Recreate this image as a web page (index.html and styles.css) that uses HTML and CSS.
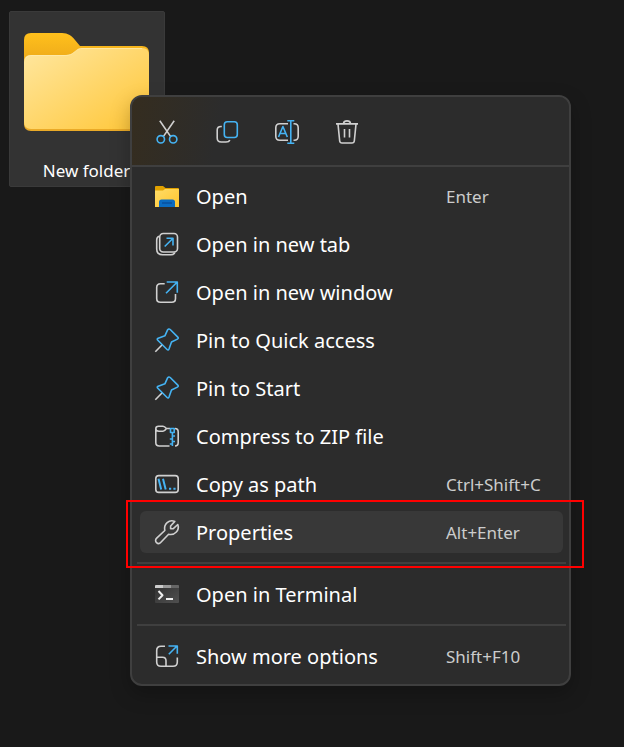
FILE: index.html
```html
<!DOCTYPE html>
<html lang="en">
<head>
<meta charset="utf-8">
<title>Desktop</title>
<link rel="stylesheet" href="styles.css">
</head>
<body>
<main class="desktop">
  <button class="file" type="button">
    <svg class="file-icon" viewBox="0 0 126 99" aria-hidden="true">
      <defs>
        <linearGradient id="front" x1="0" y1="0" x2="1" y2="1"><stop offset="0" stop-color="#ffe7a0"/><stop offset="1" stop-color="#ffc636"/></linearGradient>
        <linearGradient id="back" x1="0" y1="0" x2="0" y2="1"><stop offset="0" stop-color="#ffc01c"/><stop offset=".35" stop-color="#eaa51a"/><stop offset="1" stop-color="#eaaa28"/></linearGradient>
      </defs>
      <path fill="url(#back)" d="M0 7Q0 0 7 0H38C44 0 48 3 51 7L56 13H118Q125 13 125 20V91Q125 98 118 98H7Q0 98 0 91Z"/>
      <path fill="url(#front)" d="M0 29Q0 22 7 22H41C46 22 48 21 51 18.500C54 16 55 15 59 15H118Q125 15 125 22V89Q125 96 118 96H7Q0 96 0 89Z"/>
      <path fill="none" stroke="#ffefb8" stroke-opacity=".6" d="M2 25Q3 22.500 7 22.500H41C46 22.500 48 21 51 18.500C54 16 55 15.500 59 15.500H118"/>
    </svg>
    <span class="file-name">New folder</span>
  </button>

  <div class="menu">
    <div class="toolbar">
      <button class="tool" type="button" aria-label="Cut"><svg class="icon" viewBox="0 0 24 24"><path d="M4.800.8 15.700 16.600M19.200.8 8.300 16.600"/><g class="blue"><circle cx="5.800" cy="19.300" r="3.700"/><circle cx="18.200" cy="19.300" r="3.700"/></g></svg></button>
      <button class="tool" type="button" aria-label="Copy"><svg class="icon" viewBox="0 0 24 24"><path d="M6.800 6.500H6Q2.200 6.500 2.200 10V18Q2.200 22 6.200 22H11Q14 22 14.800 20"/><rect class="blue" x="9.300" y="1.700" width="13" height="15.800" rx="3"/></svg></button>
      <button class="tool" type="button" aria-label="Rename"><svg class="icon" viewBox="0 0 24 24"><path d="M13 3.700H4.800Q.8 3.700 .8 7.700V16.300Q.8 20.300 4.800 20.300H13M18.500 3.700H19.200Q23.200 3.700 23.200 7.700V16.300Q23.200 20.300 19.200 20.300H18.500"/><path class="blue" d="M12.300.7H19.300M12.300 23.300H19.300M15.800.7V23.300M3.500 17 7.900 6.500 12.300 17M5 13.500H10.800"/></svg></button>
      <button class="tool" type="button" aria-label="Delete"><svg class="icon" viewBox="0 0 24 24"><path d="M1 3.900H23M8.500 3.500C9 0 15 0 15.500 3.500M3 4.200 4.700 21Q5 23 7 23H17Q19 23 19.300 21L21 4.200M9.500 9V17.500M14.500 9V17.500"/></svg></button>
    </div>

    <div class="items">
      <div class="row"><button class="item" type="button">
        <svg class="icon" viewBox="0 0 24 24"><g stroke="none"><path fill="#e0a100" d="M0 3Q0 2 1 2H8L10.500 4H23Q24 4 24 5V10H0Z"/><path fill="url(#small)" d="M0 6.500H8L10 5H24V23H0Z"/><path fill="#0b6bc0" d="M4 23V18Q4 15.500 6.500 15.500H17.500Q20 15.500 20 18V23Z"/><path fill="#07438c" d="M7 18.500H17V19.500H7Z"/></g><defs><linearGradient id="small" x1="0" y1="0" x2="1" y2="1"><stop offset="0" stop-color="#ffdc68"/><stop offset="1" stop-color="#ffc52d"/></linearGradient></defs></svg>
        <span class="label">Open</span><kbd class="keys">Enter</kbd></button></div>
      <div class="row"><button class="item" type="button">
        <svg class="icon" viewBox="0 0 24 24"><rect x="4.700" y="1.500" width="17.800" height="18.500" rx="3.500"/><path d="M4 4.200Q1.700 5 1.700 8V17Q1.700 22.700 7.500 22.700H16Q19 22.700 19.800 20.500"/><path class="blue" d="M9.700 14.500 17.800 6.500M11.500 6.200H18V13.500"/></svg>
        <span class="label">Open in new tab</span></button></div>
      <div class="row"><button class="item" type="button">
        <svg class="icon" viewBox="0 0 24 24"><path d="M9.700 3.700H5.500Q1.700 3.700 1.700 7.500V18.500Q1.700 22.300 5.500 22.300H16.700Q20.500 22.300 20.500 18.500V14"/><path class="blue" d="M11 13.200 22 2.200M11.700 2H22.300V12.700"/></svg>
        <span class="label">Open in new window</span></button></div>
      <div class="row"><button class="item" type="button">
        <svg class="icon" viewBox="0 0 24 24"><path d="M.3 23.700 7.500 16.500"/><path class="blue" d="M12.700 1.700Q13.900.3 15.200 1.500L22.800 9.100Q24 10.300 22.400 11.100L16.500 14 14 21Q13.300 22.700 12.100 21.500L2.800 12.200Q1.500 10.900 3.200 10.200L10 7.700Z"/></svg>
        <span class="label">Pin to Quick access</span></button></div>
      <div class="row"><button class="item" type="button">
        <svg class="icon" viewBox="0 0 24 24"><path d="M.3 23.700 7.500 16.500"/><path class="blue" d="M12.700 1.700Q13.900.3 15.200 1.500L22.800 9.100Q24 10.300 22.400 11.100L16.500 14 14 21Q13.300 22.700 12.100 21.500L2.800 12.200Q1.500 10.900 3.200 10.200L10 7.700Z"/></svg>
        <span class="label">Pin to Start</span></button></div>
      <div class="row"><button class="item" type="button">
        <svg class="icon" viewBox="0 0 24 24"><path d="M.8 4.700V18.500Q.8 22 4.300 22H14.500M20 22Q23.200 22 23.200 18.500V8Q23.200 4.500 20 4.500M15 4.500H11.500Q9.500 2.200 8 2.200H3.600Q.8 2.200 .8 4.700 .8 7.200 4 7.200H8Q9.500 7.200 11.500 4.500"/><path class="blue" d="M15.500 4.500H19.200V8.500H15.500ZM17.400 8.500V22M17.400 12H20M17.400 15H14.800M17.400 17.500H20M17.400 20H14.800"/></svg>
        <span class="label">Compress to ZIP file</span></button></div>
      <div class="row"><button class="item" type="button">
        <svg class="icon" viewBox="0 0 24 24"><rect x=".8" y="3.600" width="22.400" height="16.800" rx="3"/><path class="blue path-mark" d="M3.500 6.700 6.200 17.500M8 6.700 10.700 17.500M14 16.800H16.200M18.400 16.800H20.600"/></svg>
        <span class="label">Copy as path</span><kbd class="keys">Ctrl+Shift+C</kbd></button></div>
      <div class="row marked"><button class="item current" type="button">
        <svg class="icon" viewBox="0 0 24 24"><path d="M19.800 1.400C14 -.9 8.500 4 9.800 10.500L1.700 18.200C.2 19.600.3 21.500 1.500 22.600 2.700 23.700 4.600 23.700 5.900 22.300L13.600 14.200C20 15.700 24.800 10.200 22.800 4.500L18.300 8.700H15.600V6Z"/></svg>
        <span class="label">Properties</span><kbd class="keys">Alt+Enter</kbd></button></div>
      <hr class="divider">
      <div class="row"><button class="item" type="button">
        <svg class="icon" viewBox="0 0 24 24"><defs><linearGradient id="term" x1="0" y1="0" x2="1" y2="1"><stop offset="0" stop-color="#303030"/><stop offset="1" stop-color="#505050"/></linearGradient></defs><g stroke="none"><rect y="3" width="24" height="18" rx="1" fill="url(#term)"/><path fill="#ccc" d="M0 6V4Q0 3 1 3H8V6Z"/><path fill="#999" d="M8 3H16V6H8Z"/><path fill="#666" d="M16 3H23Q24 3 24 4V6H16Z"/><path fill="#eee" d="M11 16H18V18H11Z"/></g><path class="prompt" d="M3.500 9 7.500 13.200 3.500 17.400"/></svg>
        <span class="label">Open in Terminal</span></button></div>
      <hr class="divider">
      <div class="row"><button class="item" type="button">
        <svg class="icon" viewBox="0 0 24 24"><path d="M10 2.200H6Q1.700 2.200 1.700 6.500V18Q1.700 22.300 6 22.300H18Q22.300 22.300 22.300 18V13.500M1.700 13.200H7.500Q11 13.200 11 16.700V22.300"/><path class="blue" d="M13.800 10.200 22 2M13.500 2H22.300V9.700"/></svg>
        <span class="label">Show more options</span><kbd class="keys">Shift+F10</kbd></button></div>
    </div>
  </div>
</main>
</body>
</html>
```
FILE: styles.css
```css
* {
  box-sizing: border-box;
}

body {
  margin: 0;
  background: #191919;
  color: #fff;
  font-family: "Noto Sans", "Open Sans", sans-serif;
}

button {
  margin: 0;
  border: 0;
  background: none;
  color: inherit;
  font: inherit;
}

.desktop {
  position: relative;
  min-height: 100vh;
  padding: 11px 9px;
}

.file {
  display: flex;
  flex-direction: column;
  align-items: center;
  gap: 26px;
  width: 156px;
  padding: 21px 14px 3px 13px;
  border: 1px solid #3a3a3a;
  border-radius: 2px;
  background: #333;
}

.file-icon {
  width: 126px;
  height: 99px;
}

.file-name {
  font-size: 17px;
  line-height: 25px;
}

.menu {
  position: absolute;
  top: 95px;
  left: 130px;
  right: 53px;
  border: 2px solid #3f3f3f;
  border-radius: 12px;
  background: #2c2c2c;
  box-shadow: 0 8px 20px rgba(0, 0, 0, 0.25);
}

.toolbar {
  display: flex;
  gap: 24px;
  padding: 17px 17px 15px;
  border-bottom: 2px solid #3f3f3f;
  border-radius: 10px 10px 0 0;
  background: linear-gradient(100deg, #352d1f, #2c2c2c 90px);
}

.tool {
  display: grid;
  place-items: center;
  width: 36px;
  height: 36px;
  padding: 0;
}

.items {
  padding: 5px 6px 4px 8px;
}

.row {
  position: relative;
  padding: 3px 0;
}

.item {
  display: grid;
  grid-template-columns: 24px 1fr 102px;
  align-items: center;
  width: 100%;
  height: 42px;
  padding: 0 15px;
  border-radius: 6px;
  text-align: left;
}

.current {
  background: #383838;
}

.marked::after {
  content: "";
  position: absolute;
  inset: -8px -21px -12px -14px;
  border: 2px solid #f00;
  pointer-events: none;
}

.label,
.keys {
  padding-top: 2px;
  line-height: 28px;
  white-space: nowrap;
}

.label {
  padding-left: 17px;
  font-size: 20px;
}

.keys {
  color: #ccc;
  font-family: inherit;
  font-size: 17px;
}

.divider {
  height: 2px;
  margin: 6px -3px;
  border: 0;
  background: #3f3f3f;
}

.icon {
  display: block;
  width: 24px;
  height: 24px;
  overflow: visible;
  fill: none;
  stroke: #d0d0d0;
  stroke-width: 1.6;
  stroke-linejoin: round;
}

.blue {
  stroke: #45b3f3;
}

.path-mark {
  stroke-width: 2;
}

.prompt {
  stroke: #eee;
  stroke-width: 2;
}
```
